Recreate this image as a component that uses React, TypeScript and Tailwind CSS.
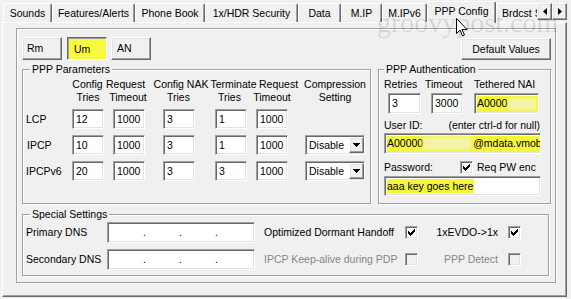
import React from "react";

const sunken =
  "border border-t-[#a0a0a0] border-l-[#a0a0a0] border-r-white border-b-white shadow-[inset_1px_1px_0_#696969,inset_-1px_-1px_0_#e3e3e3]";
const raised =
  "border border-t-white border-l-white border-r-[#696969] border-b-[#696969] shadow-[inset_-1px_-1px_0_#a0a0a0,inset_1px_1px_0_#e3e3e3]";
const etched = "border border-[#a0a0a0] shadow-[inset_1px_1px_0_#fff,1px_1px_0_#fff]";

function Field({ className = "", children }: { className?: string; children?: React.ReactNode }) {
  return (
    <div className={`${sunken} bg-white flex-none flex items-center pl-[3px] overflow-hidden whitespace-nowrap ${className}`}>
      {children}
    </div>
  );
}

function CheckMark() {
  const px: [number, number, number][] = [
    [6, 0, 1], [5, 1, 2], [0, 2, 1], [4, 2, 3], [0, 3, 2], [3, 3, 3], [0, 4, 5], [1, 5, 3], [2, 6, 1],
  ];
  return (
    <svg width="7" height="7" viewBox="0 0 7 7" shapeRendering="crispEdges">
      {px.map(([x, y, w], i) => (
        <rect key={i} x={x} y={y} width={w} height={1} fill="#000" />
      ))}
    </svg>
  );
}

function Check({ checked, disabled }: { checked?: boolean; disabled?: boolean }) {
  return (
    <span
      className={`${sunken} flex-none w-[13px] h-[13px] flex items-center justify-center ${disabled ? "bg-[#f0f0f0]" : "bg-white"}`}
    >
      {checked && <CheckMark />}
    </span>
  );
}

function DownArrow() {
  return (
    <svg width="7" height="4" viewBox="0 0 7 4" shapeRendering="crispEdges">
      <rect x="0" y="0" width="7" height="1" fill="#000" />
      <rect x="1" y="1" width="5" height="1" fill="#000" />
      <rect x="2" y="2" width="3" height="1" fill="#000" />
      <rect x="3" y="3" width="1" height="1" fill="#000" />
    </svg>
  );
}

function Dropdown({ className = "" }: { className?: string }) {
  return (
    <div className={`${sunken} bg-white flex-none w-[60px] h-[20px] flex items-center ${className}`}>
      <span className="pl-[3px] flex-1">Disable</span>
      <span className={`${raised} bg-[#f0f0f0] w-[15px] h-[16px] flex items-center justify-center`}>
        <DownArrow />
      </span>
    </div>
  );
}

function IpBox() {
  return (
    <div className={`${sunken} bg-white flex-none w-[148px] h-[21px] flex items-center`}>
      <span className="w-[35px] flex-none" />
      <span className="w-[3px] flex-none">.</span>
      <span className="w-[33px] flex-none" />
      <span className="w-[3px] flex-none">.</span>
      <span className="w-[33px] flex-none" />
      <span className="w-[3px] flex-none">.</span>
    </div>
  );
}

function Hdr({ ml, children }: { ml: string; children: React.ReactNode }) {
  return <span className={`${ml} w-[36px] flex-none flex justify-center whitespace-nowrap`}>{children}</span>;
}

const tabs: [string, string][] = [
  ["Sounds", "w-[49px]"],
  ["Features/Alerts", "w-[83px]"],
  ["Phone Book", "w-[70px]"],
  ["1x/HDR Security", "w-[93px]"],
  ["Data", "w-[43px]"],
  ["M.IP", "w-[41px]"],
  ["M.IPv6", "w-[45px]"],
];

const rows = [
  { name: "LCP", pad: "pl-[3px]", v: ["12", "1000", "3", "1", "1000"], sel: false },
  { name: "IPCP", pad: "pl-[4px]", v: ["10", "1000", "3", "1", "1000"], sel: true },
  { name: "IPCPv6", pad: "pl-[3px]", v: ["20", "1000", "3", "3", "1000"], sel: true },
];

export default function App() {
  return (
    <div className="relative w-[571px] h-[299px] overflow-hidden bg-[#f0f0f0] text-black text-[10.5px] leading-[13px] font-['Liberation_Sans',Arial,sans-serif]">
      {/* tab strip */}
      <div className="flex h-[22px] items-end pl-[3px]">
        {tabs.map(([t, w]) => (
          <div
            key={t}
            className={`${w} h-[19px] flex-none flex items-center justify-center whitespace-nowrap border-t border-l border-r border-t-white border-l-white border-r-[#696969] shadow-[inset_-1px_0_0_#a0a0a0] rounded-t-[2px]`}
          >
            {t}
          </div>
        ))}
        <div className="w-[69px] h-[22px] mb-[-1px] relative z-10 flex-none flex items-center justify-center pb-[2px] bg-[#f0f0f0] whitespace-nowrap border-t border-l border-r border-t-white border-l-white border-r-[#696969] shadow-[inset_-1px_0_0_#a0a0a0] rounded-t-[2px]">
          PPP Config
        </div>
        <div className="w-[41px] h-[19px] flex-none flex items-center pl-[5px] overflow-hidden whitespace-nowrap border-t border-l border-white">
          Brdcst SMS
        </div>
        <div className="self-start mt-[3px] flex">
          <span className={`${raised} w-[15px] h-[17px] flex items-center justify-center`}>
            <svg width="4" height="7" viewBox="0 0 4 7">
              <polygon points="4,0 4,7 0,3.5" fill="#000" />
            </svg>
          </span>
          <span className={`${raised} w-[15px] h-[17px] flex items-center justify-center`}>
            <svg width="4" height="7" viewBox="0 0 4 7">
              <polygon points="0,0 0,7 4,3.5" fill="#000" />
            </svg>
          </span>
        </div>
      </div>

      {/* tab page */}
      <div className="ml-[2px] w-[565px] h-[275px] border border-t-white border-l-white border-r-[#696969] border-b-[#696969] shadow-[inset_-1px_-1px_0_#a0a0a0] pl-[13px] pt-[5px]">
        <div className={`${etched} w-[540px] h-[255px] pl-[5px] pt-[8px] flex flex-col`}>
          {/* buttons */}
          <div className="flex h-[23px]">
            <button className={`${raised} w-[40px] h-[23px] pl-[4px] text-left`}>Rm</button>
            <button className="ml-[5px] w-[40px] h-[23px] pl-[6px] pt-[1px] text-left bg-[#f8f83c] border border-t-[#696969] border-l-[#696969] border-r-white border-b-white shadow-[inset_1px_1px_0_#a0a0a0]">
              Um
            </button>
            <button className={`${raised} ml-[4px] w-[40px] h-[23px] pl-[5px] text-left`}>AN</button>
            <button className={`${raised} ml-[310px] mt-[1px] w-[90px] h-[22px]`}>Default Values</button>
          </div>

          {/* parameter groups */}
          <div className="flex mt-[3px]">
            <fieldset className={`${etched} w-[349px] h-[141px] flex-none`}>
              <legend className="ml-[7px] px-[2px] bg-[#f0f0f0]">PPP Parameters</legend>
              <div className="flex mt-[2px]">
                <Hdr ml="ml-[46.5px]">Config</Hdr>
                <Hdr ml="ml-[2px]">Request</Hdr>
                <Hdr ml="ml-[19.5px]">Config NAK</Hdr>
                <Hdr ml="ml-[16.5px]">Terminate</Hdr>
                <Hdr ml="ml-[9px]">Request</Hdr>
                <Hdr ml="ml-[20.5px]">Compression</Hdr>
              </div>
              <div className="flex">
                <Hdr ml="ml-[47px]">Tries</Hdr>
                <Hdr ml="ml-[4px]">Timeout</Hdr>
                <Hdr ml="ml-[14.5px]">Tries</Hdr>
                <Hdr ml="ml-[15px]">Tries</Hdr>
                <Hdr ml="ml-[6.5px]">Timeout</Hdr>
                <Hdr ml="ml-[27px]">Setting</Hdr>
              </div>
              <div className="mt-[5px] flex flex-col gap-[6px]">
                {rows.map((r) => (
                  <div key={r.name} className="flex items-center h-[20px]">
                    <span className={`w-[49px] flex-none ${r.pad}`}>{r.name}</span>
                    <Field className="w-[32px] h-[20px]">{r.v[0]}</Field>
                    <Field className="ml-[9px] w-[32px] h-[20px]">{r.v[1]}</Field>
                    <Field className="ml-[18px] w-[32px] h-[20px]">{r.v[2]}</Field>
                    <Field className="ml-[20px] w-[32px] h-[20px]">{r.v[3]}</Field>
                    <Field className="ml-[9px] w-[32px] h-[20px]">{r.v[4]}</Field>
                    {r.sel && <Dropdown className="ml-[17px]" />}
                  </div>
                ))}
              </div>
            </fieldset>

            <fieldset className={`${etched} ml-[7px] w-[173px] h-[141px] flex-none`}>
              <legend className="ml-[5px] px-[2px] bg-[#f0f0f0]">PPP Authentication</legend>
              <div className="flex mt-[2px] pl-[5px] whitespace-nowrap">
                <span className="w-[41px] flex-none">Retries</span>
                <span className="w-[49px] flex-none">Timeout</span>
                <span>Tethered NAI</span>
              </div>
              <div className="flex mt-[2px] pl-[9px]">
                <Field className="w-[33px] h-[21px]">3</Field>
                <Field className="ml-[10px] w-[32px] h-[21px]">3000</Field>
                <Field className="ml-[11px] w-[65px] h-[21px] !pl-[2px]">
                  <div className="flex items-center w-full h-[16px] bg-[#f5f53a]">
                    <span>A0000</span>
                    <span className="ml-[1px] w-[28px] h-[12px] bg-[#f3f3a8] blur-[1.5px]" />
                  </div>
                </Field>
              </div>
              <div className="flex justify-between mt-[5px] pl-[5px] pr-[10px] whitespace-nowrap">
                <span>User ID:</span>
                <span>(enter ctrl-d for null)</span>
              </div>
              <Field className="ml-[5px] mt-[1px] w-[157px] h-[21px] !pl-[2px]">
                <div className="flex items-center h-[16px] bg-[#f5f53a] whitespace-nowrap">
                  <span>A00000</span>
                  <span className="w-[48px] h-[13px] flex-none bg-[#f3f3b0] blur-[2px]" />
                  <span className="ml-[2px]">@mdata.vmobile.com</span>
                </div>
              </Field>
              <div className="flex items-center mt-[7px] pl-[5px] h-[13px]">
                <span className="w-[76px] flex-none">Password:</span>
                <Check checked />
                <span className="ml-[4px] whitespace-nowrap">Req PW enc</span>
              </div>
              <Field className="ml-[5px] mt-[2px] w-[157px] h-[20px] !pl-[2px]">
                <span className="bg-[#f5f53a] leading-[14px] pr-[1px]">aaa key goes here</span>
              </Field>
            </fieldset>
          </div>

          {/* special settings */}
          <fieldset className={`${etched} mt-[4px] w-[527px] h-[68px] flex-none`}>
            <legend className="ml-[7px] px-[2px] bg-[#f0f0f0]">Special Settings</legend>
            <div className="flex items-center h-[21px] mt-[1px] whitespace-nowrap">
              <span className="w-[84px] pl-[3px] flex-none">Primary DNS</span>
              <IpBox />
              <span className="ml-[9px] w-[141px] flex-none">Optimized Dormant Handoff</span>
              <Check checked />
              <span className="w-[90px] pr-[10px] flex-none text-right">1xEVDO-&gt;1x</span>
              <Check checked />
            </div>
            <div className="flex items-center h-[21px] mt-[6px] whitespace-nowrap">
              <span className="w-[84px] pl-[3px] flex-none">Secondary DNS</span>
              <IpBox />
              <span className="ml-[9px] w-[141px] flex-none text-[#868686]">IPCP Keep-alive during PDP</span>
              <Check disabled />
              <span className="w-[90px] pr-[10px] flex-none text-right text-[#868686]">PPP Detect</span>
              <Check disabled />
            </div>
          </fieldset>
        </div>
      </div>

      {/* watermark + pointer overlay */}
      <div className="absolute left-[377px] top-[9px] z-20 pointer-events-none text-[28px] leading-none text-black/[0.12] font-['Liberation_Serif',serif] whitespace-nowrap">
        groovypost.com
      </div>
      <svg className="absolute left-[456px] top-[18px] z-30 pointer-events-none" width="12" height="19" viewBox="0 0 12 19">
        <path d="M0.5 0.5 L0.5 15.5 L4 12 L6.5 18 L8.5 17 L6 11.5 L11 11.5 Z" fill="#fff" stroke="#000" strokeWidth="1" />
      </svg>
    </div>
  );
}
